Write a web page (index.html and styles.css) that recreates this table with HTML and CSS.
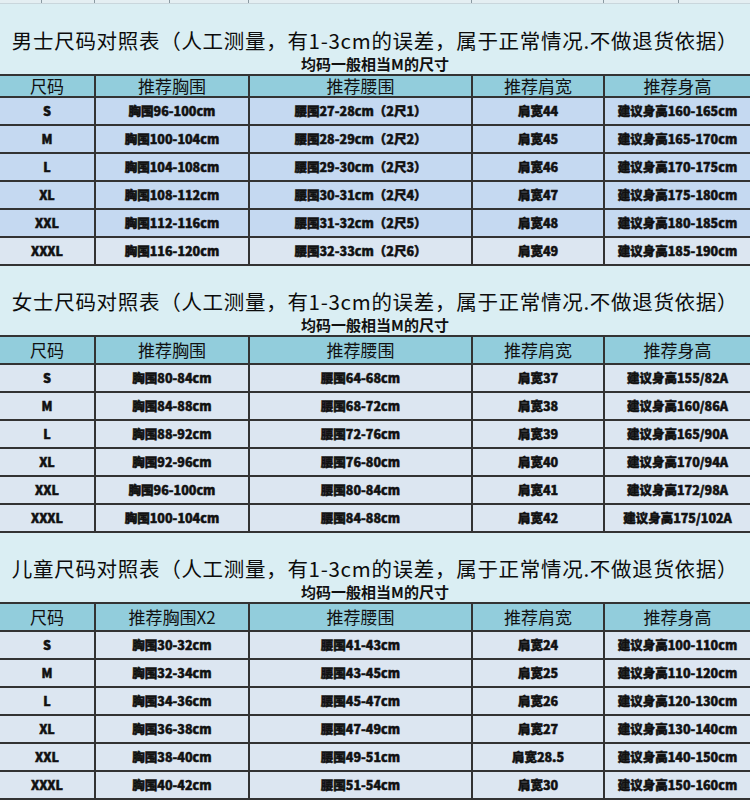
FILE: index.html
```html
<!DOCTYPE html>
<html lang="zh-CN">
<head>
<meta charset="utf-8">
<title>尺码对照表</title>
<link rel="stylesheet" href="styles.css">
</head>
<body>
<div class="page">
  <div class="strip"><span></span><span></span><span></span><span></span><span></span><span></span><span></span><span></span></div>

  <section class="chart chart-men">
    <h2 class="title">男士尺码对照表（人工测量，有1-3cm的误差，属于正常情况.不做退货依据）</h2>
    <p class="note">均码一般相当M的尺寸</p>
    <table class="sizes">
      <colgroup><col class="c1"><col class="c2"><col class="c3"><col class="c4"><col class="c5"></colgroup>
      <thead><tr><th>尺码</th><th>推荐胸围</th><th>推荐腰围</th><th>推荐肩宽</th><th>推荐身高</th></tr></thead>
      <tbody>
        <tr class="blue"><td>S</td><td>胸围96-100cm</td><td>腰围27-28cm（2尺1）</td><td>肩宽44</td><td>建议身高160-165cm</td></tr>
        <tr class="blue"><td>M</td><td>胸围100-104cm</td><td>腰围28-29cm（2尺2）</td><td>肩宽45</td><td>建议身高165-170cm</td></tr>
        <tr class="blue"><td>L</td><td>胸围104-108cm</td><td>腰围29-30cm（2尺3）</td><td>肩宽46</td><td>建议身高170-175cm</td></tr>
        <tr class="blue"><td>XL</td><td>胸围108-112cm</td><td>腰围30-31cm（2尺4）</td><td>肩宽47</td><td>建议身高175-180cm</td></tr>
        <tr class="blue"><td>XXL</td><td>胸围112-116cm</td><td>腰围31-32cm（2尺5）</td><td>肩宽48</td><td>建议身高180-185cm</td></tr>
        <tr><td>XXXL</td><td>胸围116-120cm</td><td>腰围32-33cm（2尺6）</td><td>肩宽49</td><td>建议身高185-190cm</td></tr>
      </tbody>
    </table>
  </section>

  <section class="chart">
    <h2 class="title">女士尺码对照表（人工测量，有1-3cm的误差，属于正常情况.不做退货依据）</h2>
    <p class="note">均码一般相当M的尺寸</p>
    <table class="sizes">
      <colgroup><col class="c1"><col class="c2"><col class="c3"><col class="c4"><col class="c5"></colgroup>
      <thead><tr><th>尺码</th><th>推荐胸围</th><th>推荐腰围</th><th>推荐肩宽</th><th>推荐身高</th></tr></thead>
      <tbody>
        <tr><td>S</td><td>胸围80-84cm</td><td>腰围64-68cm</td><td>肩宽37</td><td>建议身高155/82A</td></tr>
        <tr><td>M</td><td>胸围84-88cm</td><td>腰围68-72cm</td><td>肩宽38</td><td>建议身高160/86A</td></tr>
        <tr><td>L</td><td>胸围88-92cm</td><td>腰围72-76cm</td><td>肩宽39</td><td>建议身高165/90A</td></tr>
        <tr><td>XL</td><td>胸围92-96cm</td><td>腰围76-80cm</td><td>肩宽40</td><td>建议身高170/94A</td></tr>
        <tr><td>XXL</td><td>胸围96-100cm</td><td>腰围80-84cm</td><td>肩宽41</td><td>建议身高172/98A</td></tr>
        <tr><td>XXXL</td><td>胸围100-104cm</td><td>腰围84-88cm</td><td>肩宽42</td><td>建议身高175/102A</td></tr>
      </tbody>
    </table>
  </section>

  <section class="chart">
    <h2 class="title">儿童尺码对照表（人工测量，有1-3cm的误差，属于正常情况.不做退货依据）</h2>
    <p class="note">均码一般相当M的尺寸</p>
    <table class="sizes">
      <colgroup><col class="c1"><col class="c2"><col class="c3"><col class="c4"><col class="c5"></colgroup>
      <thead><tr><th>尺码</th><th>推荐胸围X2</th><th>推荐腰围</th><th>推荐肩宽</th><th>推荐身高</th></tr></thead>
      <tbody>
        <tr><td>S</td><td>胸围30-32cm</td><td>腰围41-43cm</td><td>肩宽24</td><td>建议身高100-110cm</td></tr>
        <tr><td>M</td><td>胸围32-34cm</td><td>腰围43-45cm</td><td>肩宽25</td><td>建议身高110-120cm</td></tr>
        <tr><td>L</td><td>胸围34-36cm</td><td>腰围45-47cm</td><td>肩宽26</td><td>建议身高120-130cm</td></tr>
        <tr><td>XL</td><td>胸围36-38cm</td><td>腰围47-49cm</td><td>肩宽27</td><td>建议身高130-140cm</td></tr>
        <tr><td>XXL</td><td>胸围38-40cm</td><td>腰围49-51cm</td><td>肩宽28.5</td><td>建议身高140-150cm</td></tr>
        <tr><td>XXXL</td><td>胸围40-42cm</td><td>腰围51-54cm</td><td>肩宽30</td><td>建议身高150-160cm</td></tr>
      </tbody>
    </table>
  </section>
</div>
</body>
</html>
```
FILE: styles.css
```css
html, body {
  margin: 0;
  padding: 0;
  background: #daeef3;
}
.page {
  width: 750px;
  height: 800px;
  overflow: hidden;
  background: #daeef3;
  font-family: "Noto Sans CJK SC", "Noto Sans", sans-serif;
  color: #111;
}
.strip {
  display: grid;
  grid-template-columns: 42px 53px 75px 79px 223px 132px 75px 1fr;
  height: 3px;
  background: #e4eef2;
  border-bottom: 1px solid #c9d6dc;
}
.strip span {
  border-right: 1px solid #8a9aa2;
}
.strip span:last-child {
  border-right: none;
}
.chart {
  margin: 0;
}
.title {
  margin: 0;
  padding-top: 21px;
  height: 28px;
  line-height: 28px;
  font-size: 20.5px;
  font-weight: 400;
  letter-spacing: 0.7px;
  text-align: center;
  white-space: nowrap;
  color: #0c0c0c;
}
.chart-men .title {
  padding-top: 22px;
}
.note {
  margin: 0;
  height: 20px;
  line-height: 20px;
  font-size: 15px;
  font-weight: 700;
  text-align: center;
  color: #111;
}
.sizes {
  width: 750px;
  table-layout: fixed;
  border-collapse: collapse;
}
.c1 { width: 95px; }
.c2 { width: 154px; }
.c3 { width: 223px; }
.c4 { width: 132px; }
.c5 { width: 146px; }
.sizes th,
.sizes td {
  border: 2px solid #333;
  padding: 0;
  text-align: center;
  white-space: nowrap;
}
.sizes th:first-child,
.sizes td:first-child {
  border-left: none;
}
.sizes th:last-child,
.sizes td:last-child {
  border-right: none;
}
.sizes th {
  height: 26px;
  background: #92cddc;
  font-size: 17px;
  font-weight: 400;
  line-height: 20px;
  color: #111;
}
.chart-men .sizes th {
  height: 20px;
}
.sizes td {
  height: 26px;
  background: #dce6f1;
  font-size: 12.5px;
  font-weight: 900;
  line-height: 16px;
  color: #111;
  -webkit-text-stroke: 0.5px #111;
}
.sizes tr.blue td {
  background: #c5d9f1;
}
```
